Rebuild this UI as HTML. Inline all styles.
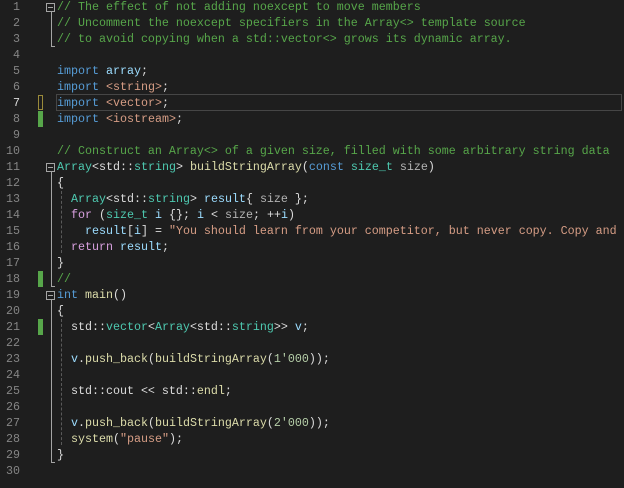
<!DOCTYPE html>
<html><head><meta charset="utf-8"><style>
body{margin:0;width:624px;height:488px;background:#1e1e1e;overflow:hidden;position:relative;font-family:"Liberation Mono",monospace;font-size:11.67px}
.n{position:absolute;left:0;width:20px;text-align:right;color:#858585;line-height:16px}
.l{position:absolute;left:57px;white-space:pre;color:#dcdcdc;line-height:16px}
.c{color:#57a64a}.k{color:#569cd6}.s{color:#d69d85}.t{color:#4ec9b0}.f{color:#dcdcaa}.v{color:#9cdcfe}.p{color:#d8a0df}.g{color:#b4b4b4}
.box{position:absolute;left:46px;width:7px;height:7px;border:1px solid #a5a5a5}
.box:after{content:"";position:absolute;left:1px;top:3px;width:5px;height:1px;background:#a5a5a5}
.vl{position:absolute;left:51px;width:1px;background:#a5a5a5}
.hl{position:absolute;left:51px;width:4px;height:1px;background:#a5a5a5}
.dg{position:absolute;left:61px;width:0;border-left:1px dashed #5a5a5a}
.gr{position:absolute;left:38px;width:5px;height:16px;background:#57a64a}
</style></head><body>
<div style="position:absolute;left:56px;top:94px;width:564px;height:15px;border:1px solid #464646"></div>
<div style="position:absolute;left:38px;top:95px;width:3px;height:13px;border:1px solid #9a8a3a"></div>
<div class="gr" style="top:111px"></div>
<div class="gr" style="top:271px"></div>
<div class="gr" style="top:319px"></div>
<div class="box" style="top:3px"></div><div class="vl" style="top:12px;height:34px"></div><div class="hl" style="top:46px"></div>
<div class="box" style="top:163px"></div><div class="vl" style="top:172px;height:114px"></div><div class="hl" style="top:286px"></div>
<div class="box" style="top:291px"></div><div class="vl" style="top:300px;height:162px"></div><div class="hl" style="top:462px"></div>
<div class="dg" style="top:191px;height:62px"></div>
<div class="dg" style="top:319px;height:126px"></div>

<div class="n" style="top:-1px">1</div><div class="n" style="top:15px">2</div><div class="n" style="top:31px">3</div><div class="n" style="top:47px">4</div><div class="n" style="top:63px">5</div><div class="n" style="top:79px">6</div><div class="n" style="top:95px;color:#dcdcdc">7</div><div class="n" style="top:111px">8</div><div class="n" style="top:127px">9</div><div class="n" style="top:143px">10</div><div class="n" style="top:159px">11</div><div class="n" style="top:175px">12</div><div class="n" style="top:191px">13</div><div class="n" style="top:207px">14</div><div class="n" style="top:223px">15</div><div class="n" style="top:239px">16</div><div class="n" style="top:255px">17</div><div class="n" style="top:271px">18</div><div class="n" style="top:287px">19</div><div class="n" style="top:303px">20</div><div class="n" style="top:319px">21</div><div class="n" style="top:335px">22</div><div class="n" style="top:351px">23</div><div class="n" style="top:367px">24</div><div class="n" style="top:383px">25</div><div class="n" style="top:399px">26</div><div class="n" style="top:415px">27</div><div class="n" style="top:431px">28</div><div class="n" style="top:447px">29</div><div class="n" style="top:463px">30</div>

<div class="l c" style="top:-1px">// The effect of not adding noexcept to move members</div>
<div class="l c" style="top:15px">// Uncomment the noexcept specifiers in the Array&lt;&gt; template source</div>
<div class="l c" style="top:31px">// to avoid copying when a std::vector&lt;&gt; grows its dynamic array.</div>
<div class="l" style="top:63px"><span class="k">import</span> <span class="v">array</span>;</div>
<div class="l" style="top:79px"><span class="k">import</span> <span class="s">&lt;string&gt;</span>;</div>
<div class="l" style="top:95px"><span class="k">import</span> <span class="s">&lt;vector&gt;</span>;</div>
<div class="l" style="top:111px"><span class="k">import</span> <span class="s">&lt;iostream&gt;</span>;</div>
<div class="l c" style="top:143px">// Construct an Array&lt;&gt; of a given size, filled with some arbitrary string data</div>
<div class="l" style="top:159px"><span class="t">Array</span>&lt;std::<span class="t">string</span>&gt; <span class="f">buildStringArray</span>(<span class="k">const</span> <span class="t">size_t</span> <span class="g">size</span>)</div>
<div class="l" style="top:175px">{</div>
<div class="l" style="top:191px">  <span class="t">Array</span>&lt;std::<span class="t">string</span>&gt; <span class="v">result</span>{ <span class="g">size</span> };</div>
<div class="l" style="top:207px">  <span class="p">for</span> (<span class="t">size_t</span> <span class="v">i</span> {}; <span class="v">i</span> &lt; <span class="g">size</span>; ++<span class="v">i</span>)</div>
<div class="l" style="top:223px">    <span class="v">result</span>[<span class="v">i</span>] = <span class="s">"You should learn from your competitor, but never copy. Copy and</span></div>
<div class="l" style="top:239px">  <span class="p">return</span> <span class="v">result</span>;</div>
<div class="l" style="top:255px">}</div>
<div class="l c" style="top:271px">//</div>
<div class="l" style="top:287px"><span class="k">int</span> <span class="f">main</span>()</div>
<div class="l" style="top:303px">{</div>
<div class="l" style="top:319px">  std::<span class="t">vector</span>&lt;<span class="t">Array</span>&lt;std::<span class="t">string</span>&gt;&gt; <span class="v">v</span>;</div>
<div class="l" style="top:351px">  <span class="v">v</span>.<span class="f">push_back</span>(<span class="f">buildStringArray</span>(<span style="color:#b5cea8">1'000</span>));</div>
<div class="l" style="top:383px">  std::cout &lt;&lt; std::<span class="f">endl</span>;</div>
<div class="l" style="top:415px">  <span class="v">v</span>.<span class="f">push_back</span>(<span class="f">buildStringArray</span>(<span style="color:#b5cea8">2'000</span>));</div>
<div class="l" style="top:431px">  <span class="f">system</span>(<span class="s">"pause"</span>);</div>
<div class="l" style="top:447px">}</div>
</body></html>
